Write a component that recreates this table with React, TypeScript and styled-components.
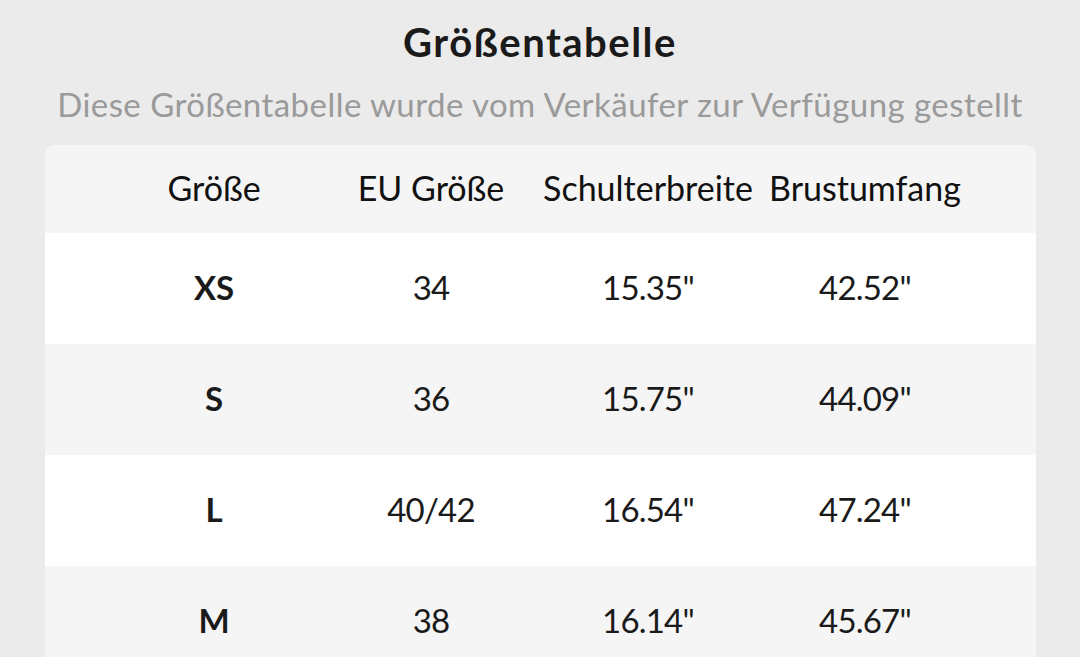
import styled, { createGlobalStyle } from "styled-components";

const GlobalStyle = createGlobalStyle`
  html, body {
    margin: 0;
    padding: 0;
    background: #ebebeb;
  }
  body {
    font-family: Lato, "Noto Sans", sans-serif;
    color: #1a1a1a;
  }
`;

const Page = styled.div`
  width: 1080px;
  height: 657px;
  overflow: hidden;
  display: flex;
  flex-direction: column;
  align-items: center;
  padding-top: 18px;
  box-sizing: border-box;
`;

const Title = styled.h1`
  margin: 0;
  font-size: 40px;
  font-weight: 700;
  line-height: 48px;
  letter-spacing: 1.5px;
  color: #1a1a1a;
`;

const Subtitle = styled.p`
  margin: 18px 0 0;
  font-size: 33px;
  line-height: 40px;
  letter-spacing: 0.45px;
  color: #9a9a9a;
  white-space: nowrap;
`;

const Card = styled.div`
  margin-top: 21px;
  width: 991px;
  border-radius: 10px;
  overflow: hidden;
  background: #f5f5f5;
  flex-shrink: 0;
`;

const Row = styled.div<{ $shade: "head" | "light" | "dark" }>`
  display: grid;
  grid-template-columns: repeat(4, 217px);
  padding: 0 61px;
  align-items: center;
  height: ${(p) => (p.$shade === "head" ? 88 : 111)}px;
  background: ${(p) => (p.$shade === "light" ? "#ffffff" : "#f5f5f5")};
`;

const Cell = styled.div<{ $bold?: boolean }>`
  text-align: center;
  font-size: 33px;
  line-height: 40px;
  margin-top: -4px;
  font-weight: ${(p) => (p.$bold ? 700 : 400)};
  letter-spacing: ${(p) => (p.$bold ? 0 : -0.8)}px;
  white-space: nowrap;
  color: #1a1a1a;
`;

const HeadCell = styled.div`
  text-align: center;
  font-size: 34px;
  line-height: 40px;
  margin-top: -3px;
  white-space: nowrap;
  color: #111;
`;

const headers = ["Größe", "EU Größe", "Schulterbreite", "Brustumfang"];

const rows = [
  ["XS", "34", '15.35"', '42.52"'],
  ["S", "36", '15.75"', '44.09"'],
  ["L", "40/42", '16.54"', '47.24"'],
  ["M", "38", '16.14"', '45.67"'],
];

export default function App() {
  return (
    <>
      <GlobalStyle />
      <Page>
        <Title>Größentabelle</Title>
        <Subtitle>Diese Größentabelle wurde vom Verkäufer zur Verfügung gestellt</Subtitle>
        <Card>
          <Row $shade="head">
            {headers.map((h) => (
              <HeadCell key={h}>{h}</HeadCell>
            ))}
          </Row>
          {rows.map((r, i) => (
            <Row key={r[0]} $shade={i % 2 === 0 ? "light" : "dark"}>
              {r.map((v, j) => (
                <Cell key={j} $bold={j === 0}>
                  {v}
                </Cell>
              ))}
            </Row>
          ))}
        </Card>
      </Page>
    </>
  );
}
